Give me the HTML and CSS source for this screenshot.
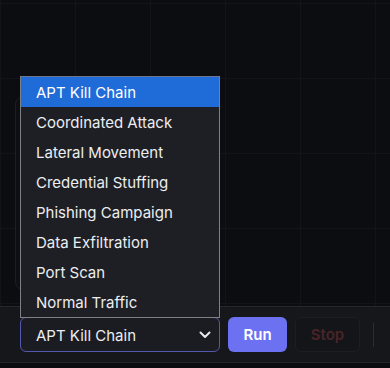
FILE: index.html
```html
<!DOCTYPE html>
<html>
<head>
<meta charset="utf-8">
<link rel="stylesheet" href="styles.css">
</head>
<body>
<div class="app">
  <div class="canvas">
    <div class="panel"></div>
  </div>
  <div class="toolbar">
    <div class="select">
      <span class="select-value">APT Kill Chain</span>
      <svg class="chevron" width="12" height="8" viewBox="0 0 12 8"><path d="M1.5 1.5 L6 6 L10.5 1.5" fill="none" stroke="#e8e9ec" stroke-width="2" stroke-linecap="round" stroke-linejoin="round"/></svg>
    </div>
    <button class="btn btn-run">Run</button>
    <button class="btn btn-stop">Stop</button>
    <div class="sep"></div>
  </div>
  <div class="footer"></div>
  <ul class="dropdown">
    <li class="opt active">APT Kill Chain</li>
    <li class="opt">Coordinated Attack</li>
    <li class="opt">Lateral Movement</li>
    <li class="opt">Credential Stuffing</li>
    <li class="opt">Phishing Campaign</li>
    <li class="opt">Data Exfiltration</li>
    <li class="opt">Port Scan</li>
    <li class="opt">Normal Traffic</li>
  </ul>
</div>
</body>
</html>
```
FILE: styles.css
```css
* { box-sizing: border-box; }
html, body { margin: 0; padding: 0; }
body {
  background: #0c0d11;
  font-family: Inter, "Noto Sans", sans-serif;
  width: 390px;
  height: 368px;
  overflow: hidden;
}
.app { position: relative; width: 390px; height: 368px; }
.canvas {
  height: 306px;
  padding: 96px 0 0 15px;
  background-color: #0c0d11;
  background-image:
    linear-gradient(to right, #121418 1px, transparent 1px),
    linear-gradient(to bottom, #121418 1px, transparent 1px);
  background-size: 75px 75px;
  background-position: 0 3px;
}
.panel {
  width: 200px;
  height: 194px;
  border: 1px solid #1c1e23;
  border-radius: 8px;
  background: #0e0f13;
}
.toolbar {
  height: 57px;
  border-top: 1px solid #26272c;
  border-bottom: 1px solid #26272c;
  background: #16171b;
  display: flex;
  align-items: center;
  padding-left: 20px;
  gap: 8px;
}
.select {
  width: 200px;
  height: 35px;
  border: 1px solid #5457ad;
  border-radius: 6px;
  background: #1b1c21;
  display: flex;
  align-items: center;
  justify-content: space-between;
  padding: 1px 8px 0 15px;
  color: #eceef1;
  font-size: 15px;
}
.chevron { display: block; }
.btn {
  height: 35px;
  border-radius: 6px;
  font-family: inherit;
  font-size: 15px;
  font-weight: 600;
  padding: 0;
}
.btn-run {
  width: 59px;
  background: #6c71f2;
  color: #ffffff;
  border: none;
}
.btn-stop {
  width: 65px;
  background: #141519;
  border: 1px solid #1d1e23;
  color: #4a2427;
}
.sep {
  width: 1px;
  height: 24px;
  background: #2c2d33;
  margin-left: 5px;
}
.footer { height: 5px; background: #0c0d11; }
.dropdown {
  position: absolute;
  left: 20px;
  top: 76px;
  width: 200px;
  margin: 0;
  padding: 0;
  list-style: none;
  background: #1e1f24;
  border: 1px solid #7d8087;
  border-top-color: #6d7690;
}
.opt {
  height: 30px;
  line-height: 31px;
  padding-left: 15px;
  color: #eceef1;
  font-size: 15px;
  overflow: hidden;
}
.opt.active { background: #1f6bd8; color: #ffffff; }
```
